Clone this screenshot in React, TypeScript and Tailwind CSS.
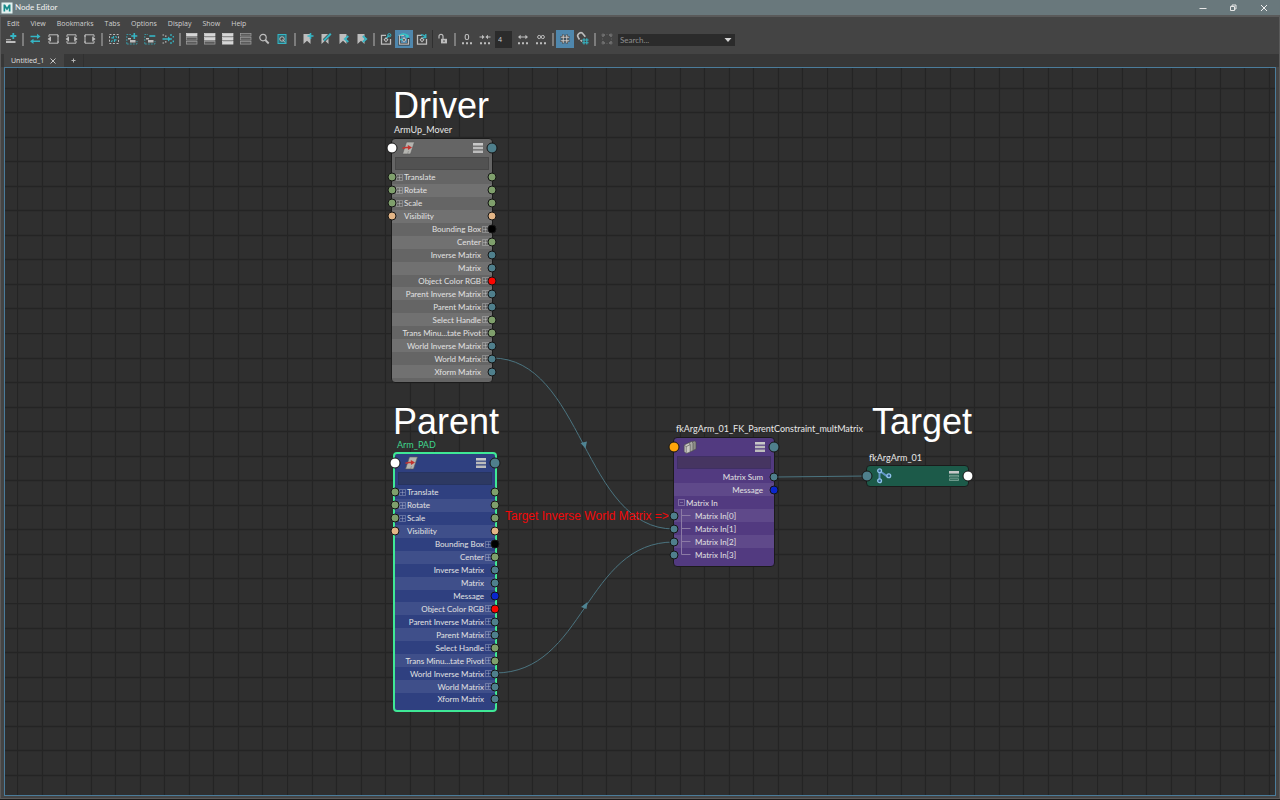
import type { ReactNode } from 'react';
import { useState } from 'react';

const CYAN = '#35b5c4';
const LIGHT = '#bdbdbd';

const menus = ['Edit', 'View', 'Bookmarks', 'Tabs', 'Options', 'Display', 'Show', 'Help'];

type Port = 'green' | 'teal' | 'peach' | 'black' | 'red' | 'blue' | 'white' | 'orange';

const portColors: Record<Port, string> = {
  green: 'bg-[#7f9f6c]',
  teal: 'bg-[#4f7f8c]',
  peach: 'bg-[#e3b586]',
  black: 'bg-black',
  red: 'bg-[#fb0500]',
  blue: 'bg-[#0a26cc]',
  white: 'bg-white',
  orange: 'bg-[#ffa50a]',
};

interface Attr {
  name: string;
  left?: Port;
  right?: Port;
  expand?: boolean;
  align?: 'left' | 'right';
}

const inputs: Attr[] = [
  { name: 'Translate', left: 'green', right: 'green', expand: true, align: 'left' },
  { name: 'Rotate', left: 'green', right: 'green', expand: true, align: 'left' },
  { name: 'Scale', left: 'green', right: 'green', expand: true, align: 'left' },
  { name: 'Visibility', left: 'peach', right: 'peach', align: 'left' },
  { name: 'Bounding Box', right: 'black', expand: true },
  { name: 'Center', right: 'green', expand: true },
  { name: 'Inverse Matrix', right: 'teal' },
  { name: 'Matrix', right: 'teal' },
];

const outputs: Attr[] = [
  { name: 'Object Color RGB', right: 'red', expand: true },
  { name: 'Parent Inverse Matrix', right: 'teal', expand: true },
  { name: 'Parent Matrix', right: 'teal', expand: true },
  { name: 'Select Handle', right: 'green', expand: true },
  { name: 'Trans Minu...tate Pivot', right: 'green', expand: true },
  { name: 'World Inverse Matrix', right: 'teal', expand: true },
  { name: 'World Matrix', right: 'teal', expand: true },
  { name: 'Xform Matrix', right: 'teal' },
];

const driverAttrs = [...inputs, ...outputs];
const parentAttrs: Attr[] = [...inputs, { name: 'Message', right: 'blue' }, ...outputs];

function Icon({ children }: { children: ReactNode }) {
  return (
    <svg viewBox="0 0 18 18" className="block h-[18px] w-[18px]" fill="none" aria-hidden="true">
      {children}
    </svg>
  );
}

function ToolButton({ label, active, children }: { label: string; active?: boolean; children: ReactNode }) {
  return (
    <button
      type="button"
      title={label}
      aria-label={label}
      className={`h-[18px] w-[18px] shrink-0 ${active ? 'bg-[#4f87ad]' : 'hover:bg-[#555]'}`}
    >
      <Icon>{children}</Icon>
    </button>
  );
}

function Separator({ width = 'w-[6px]' }: { width?: string }) {
  return (
    <div className={`flex h-[13px] shrink-0 justify-center ${width}`}>
      <div className="w-[2px] bg-[#7c7c7c]" />
    </div>
  );
}

function BoxArrow({ left, right }: { left?: boolean; right?: boolean }) {
  return (
    <>
      <path d="M5 7V4.8h9V7M5 11v2.2h9V11" stroke={LIGHT} />
      {!left && <path d="M5 5v8" stroke={LIGHT} />}
      {!right && <path d="M14 5v8" stroke={LIGHT} />}
      {left && <path d="M7 6.3v5.4L3.6 9z" fill={LIGHT} />}
      {right && <path d="M12.2 6.3v5.4L15.6 9z" fill={LIGHT} />}
    </>
  );
}

function Bars({ filled }: { filled: number }) {
  return (
    <>
      {[4, 8, 12].map((y, i) => (
        <rect
          key={y}
          x="3.5"
          y={y - 0.5}
          width="10.5"
          height="2.6"
          fill={i < filled ? '#d6d6d6' : '#5a5a5a'}
          stroke={i < filled ? '#d6d6d6' : '#a0a0a0'}
          strokeWidth="0.7"
        />
      ))}
    </>
  );
}

function Bookmark() {
  return <path d="M4.5 4h7v10L8 10.8 4.5 14z" fill={LIGHT} />;
}

function Container({ children }: { children: ReactNode }) {
  return (
    <>
      <path d="M9 5.3H4.5v8.9h9V9" stroke={LIGHT} strokeWidth="1.3" />
      <path d="M9 7l2.5 2.8L9 12.5 6.5 9.8z" fill={LIGHT} />
      <circle cx="9" cy="9.8" r="0.9" fill="#333" />
      {children}
    </>
  );
}

function Dots() {
  return <path d="M4 12.2h2v2H4zM8 12.2h2v2H8zM12 12.2h2v2h-2z" fill={LIGHT} />;
}

function Toolbar() {
  const [depth, setDepth] = useState('4');
  const [search, setSearch] = useState('');

  return (
    <div className="flex h-[18px] items-center">
      <ToolButton label="Create node">
        <path d="M11.3 3v6M8.3 6h6" stroke={CYAN} strokeWidth="1.8" />
        <path d="M4 9.2h5v1H4zM4 11h9.5v2H4z" fill={LIGHT} />
      </ToolButton>
      <Separator />
      <ToolButton label="Input and output connections">
        <path d="M4.5 6.5h8M14 11.3H6" stroke={CYAN} strokeWidth="1.6" />
        <path d="M11 3.8L14.5 6.5 11 9zM7.5 8.8L4 11.3 7.5 14z" fill={CYAN} />
      </ToolButton>
      <ToolButton label="Input connections"><BoxArrow left /></ToolButton>
      <ToolButton label="Input and output boxes"><BoxArrow left right /></ToolButton>
      <ToolButton label="Output connections"><BoxArrow right /></ToolButton>
      <Separator width="w-[7px]" />
      <ToolButton label="Rearrange graph">
        <rect x="4.5" y="4.5" width="9" height="9" stroke={LIGHT} strokeDasharray="2 1.6" />
        <path d="M6.3 7.8h2.2V6M11.6 9.9H9.5v2M10.5 6.2l1.5 1.4M6.2 11.8l1.3-1.4" stroke={CYAN} strokeWidth="1.2" />
      </ToolButton>
      <ToolButton label="Add selected nodes">
        <path d="M3.8 14V4.5H8M3.8 14H14v-3" stroke={CYAN} strokeWidth="0.7" strokeDasharray="2 1" />
        <path d="M11.3 3v6M8.3 6h6" stroke={CYAN} strokeWidth="1.6" />
        <path d="M5 8h3v1.4H5zM7 10h5.5v2.4H7z" fill={LIGHT} />
      </ToolButton>
      <ToolButton label="Remove selected nodes">
        <path d="M3.8 14V4.5H7M3.8 14H14v-3" stroke={CYAN} strokeWidth="0.7" strokeDasharray="2 1" />
        <path d="M8.3 6h6" stroke={CYAN} strokeWidth="1.6" />
        <path d="M5 8h3v1.4H5zM7 10h5.5v2.4H7z" fill={LIGHT} />
      </ToolButton>
      <ToolButton label="Clear graph">
        <path d="M3.5 5h1.6M3.5 13h1.6M6 6.2h1.5M6 11.8h1.5" stroke={LIGHT} strokeWidth="1.2" />
        <path d="M3.5 9h6.5M12 4v2M12 12v2M12 8v2M14.3 6v1.6M14.3 10.6v1.6" stroke={CYAN} strokeWidth="1.3" />
        <path d="M9 6.4L12 9 9 11.6z" fill={CYAN} />
      </ToolButton>
      <Separator />
      <ToolButton label="Hide attributes"><Bars filled={1} /></ToolButton>
      <ToolButton label="Show connected attributes"><Bars filled={2} /></ToolButton>
      <ToolButton label="Show all attributes"><Bars filled={3} /></ToolButton>
      <ToolButton label="Show custom attributes"><Bars filled={0} /></ToolButton>
      <ToolButton label="Filter attributes">
        <circle cx="8" cy="7.6" r="3.2" stroke={LIGHT} strokeWidth="1.2" />
        <path d="M10.3 10l3.4 3.5" stroke={LIGHT} strokeWidth="1.8" />
      </ToolButton>
      <ToolButton label="Toggle swatches">
        <rect x="5" y="4.5" width="8" height="9" fill="#2b6f78" stroke={CYAN} strokeWidth="1" />
        <circle cx="9" cy="9" r="2.2" fill="#444" stroke={LIGHT} strokeWidth="1" />
        <path d="M9.5 9.5L12 12.5" stroke={LIGHT} />
      </ToolButton>
      <Separator width="w-2" />
      <ToolButton label="Create bookmark">
        <Bookmark />
        <path d="M11.5 3v6M8.5 6h6" stroke={CYAN} strokeWidth="1.6" />
      </ToolButton>
      <ToolButton label="Edit bookmark">
        <Bookmark />
        <path d="M7 10.5L13.8 3.8" stroke="#444" strokeWidth="3.4" />
        <path d="M7 10.5L13.8 3.8" stroke={CYAN} strokeWidth="2" />
      </ToolButton>
      <ToolButton label="Previous bookmark">
        <Bookmark />
        <path d="M13.3 6l-3.4 3 3.4 3" stroke={CYAN} strokeWidth="1.8" />
      </ToolButton>
      <ToolButton label="Next bookmark">
        <Bookmark />
        <path d="M9.8 6l3.4 3-3.4 3" stroke={CYAN} strokeWidth="1.8" />
      </ToolButton>
      <Separator />
      <ToolButton label="Pin graph">
        <Container>
          <path d="M9.5 8l3-2.8" stroke={CYAN} strokeWidth="1.3" />
          <circle cx="12.3" cy="5.2" r="1.6" stroke={CYAN} />
        </Container>
      </ToolButton>
      <ToolButton label="Synchronize selection" active>
        <path d="M4.5 6v8.2h9V8" stroke="#303030" strokeWidth="2.4" />
        <Container>
          <path d="M5 5.5a4 3 0 0 1 7 0M5 9.5h3" stroke="#33c7c7" strokeWidth="1.5" />
          <circle cx="12.3" cy="6.2" r="1.6" fill="#33c7c7" />
        </Container>
      </ToolButton>
      <ToolButton label="Auto frame">
        <Container>
          <path d="M8 5a4 4 0 0 1 4.5 2M12.8 4v3.5H9.5" stroke={CYAN} strokeWidth="1.3" />
        </Container>
      </ToolButton>
      <div className="mx-px h-[18px] w-px shrink-0 bg-[#303030]" />
      <ToolButton label="Lock node">
        <path d="M5 8.5V6.3a2 2 0 0 1 4 0V9" stroke={LIGHT} strokeWidth="1.2" />
        <rect x="7" y="8.8" width="6" height="4.6" fill={LIGHT} />
        <path d="M10 10.2v1.8" stroke="#444" />
      </ToolButton>
      <Separator />
      <ToolButton label="Traversal depth zero">
        <rect x="7.2" y="4.5" width="3.4" height="5" rx="1.5" stroke={LIGHT} strokeWidth="1.1" />
        <Dots />
      </ToolButton>
      <ToolButton label="Reduce traversal depth">
        <path d="M3.5 7h3.5M14.5 7H11" stroke={LIGHT} />
        <path d="M6 4.7L8.6 7 6 9.3zM12 4.7L9.4 7 12 9.3z" fill={LIGHT} />
        <Dots />
      </ToolButton>
      <input
        type="text"
        aria-label="Traversal depth"
        value={depth}
        onChange={(e) => setDepth(e.target.value)}
        className="mr-[2px] ml-px h-[17px] w-[17px] shrink-0 bg-[#2b2b2b] px-[3px] font-['Open_Sans',sans-serif] text-[7px] text-[#d0d0d0] outline-none"
      />
      <ToolButton label="Increase traversal depth">
        <path d="M6 7h6" stroke={LIGHT} />
        <path d="M6.6 4.7L4 7l2.6 2.3zM11.4 4.7L14 7l-2.6 2.3z" fill={LIGHT} />
        <Dots />
      </ToolButton>
      <ToolButton label="Infinite traversal depth">
        <circle cx="7.2" cy="7" r="1.6" stroke={LIGHT} />
        <circle cx="10.8" cy="7" r="1.6" stroke={LIGHT} />
        <Dots />
      </ToolButton>
      <Separator />
      <ToolButton label="Grid visibility" active>
        <path d="M7.2 4.5v9M10.8 4.5v9M4.5 7.2h9M4.5 10.8h9" stroke="#3a3a3a" strokeWidth="2.4" />
        <path d="M7.2 4.8v8.4M10.8 4.8v8.4M4.8 7.2h8.4M4.8 10.8h8.4" stroke="#d0d0d0" strokeWidth="1" />
      </ToolButton>
      <ToolButton label="Grid snap">
        <path d="M5.5 9.5L4.3 7.6a3 3 0 0 1 5-3.4l2 2.6M8 11.5L6.6 10" stroke={LIGHT} strokeWidth="1.6" />
        <path d="M10 8.2v6.4M12.8 8.2v6.4M8.2 10h6.4M8.2 12.8h6.4" stroke={CYAN} strokeWidth="1.1" />
      </ToolButton>
      <Separator />
      <ToolButton label="Frame search results">
        <path d="M5 7V5h2M11 5h2v2M13 11v2h-2M7 13H5v-2" stroke="#777" strokeWidth="1.3" />
        <path d="M4 4h2v2H4zM12 4h2v2h-2zM4 12h2v2H4zM12 12h2v2h-2zM8.5 4.5h1M8.5 13.5h1M4.5 8.5v1M13.5 8.5v1" stroke="#6d6d6d" strokeWidth="0.7" />
      </ToolButton>
      <div className="mt-[2px] ml-[2px] flex h-3 w-[117px] shrink-0 items-center bg-[#2b2b2b]">
        <input
          type="text"
          aria-label="Search"
          placeholder="Search..."
          value={search}
          onChange={(e) => setSearch(e.target.value)}
          className="h-3 w-[104px] bg-transparent px-[2px] font-[Lato,sans-serif] text-[8px] text-[#ccc] outline-none placeholder:text-[#8f8f8f]"
        />
        <button type="button" aria-label="Search history" className="flex h-3 w-3 items-center justify-center">
          <svg viewBox="0 0 8 4" className="h-1 w-2" aria-hidden="true">
            <path d="M0.5 0h7L4 4z" fill="#d5d5d5" />
          </svg>
        </button>
      </div>
    </div>
  );
}

function TitleBar() {
  return (
    <header className="flex h-[15px] shrink-0 items-center bg-[#69787c] text-[#f2f2f2]">
      <svg viewBox="0 0 12 12" className="ml-px h-3 w-3" aria-hidden="true">
        <rect x="0.5" y="0.5" width="11" height="11" fill="#e3f1f0" />
        <path d="M2.5 9.5v-7h1.6L6 5.6l1.9-3.1h1.6v7H7.8V6L6 8.6 4.2 6v3.5z" fill="#178b8b" />
      </svg>
      <h1 className="ml-[2px] font-[Lato,sans-serif] text-[8px] leading-[15px]">Node Editor</h1>
      <div className="ml-auto flex">
        <button type="button" aria-label="Minimize" className="flex h-[15px] w-[30px] items-center justify-center">
          <svg viewBox="0 0 8 8" className="h-2 w-2" aria-hidden="true">
            <path d="M0.5 4.5h7" stroke="#e6e6e6" />
          </svg>
        </button>
        <button type="button" aria-label="Restore" className="flex h-[15px] w-[30px] items-center justify-center">
          <svg viewBox="0 0 8 8" className="h-2 w-2" fill="none" stroke="#e6e6e6" aria-hidden="true">
            <path d="M1.5 2.5h4v4h-4zM3 2.2V1h4v4H5.8" />
          </svg>
        </button>
        <button type="button" aria-label="Close" className="flex h-[15px] w-8 items-center justify-center">
          <svg viewBox="0 0 8 8" className="h-2 w-2" stroke="#f0f0f0" aria-hidden="true">
            <path d="M1 1l6 6M7 1L1 7" />
          </svg>
        </button>
      </div>
    </header>
  );
}

function Plug({ color, side, big }: { color: Port; side: 'left' | 'right'; big?: boolean }) {
  const size = big ? 'h-[11px] w-[11px]' : 'h-[9px] w-[9px]';
  const place = side === 'left' ? 'left-0 -translate-x-1/2' : 'right-0 translate-x-1/2';
  return (
    <span
      className={`absolute top-1/2 -translate-y-1/2 rounded-full border border-[#151515] ${size} ${place} ${portColors[color]}`}
    />
  );
}

function Expander({ open }: { open?: boolean }) {
  return (
    <svg viewBox="0 0 7 7" className="h-[7px] w-[7px] shrink-0" fill="none" stroke="#fff" strokeOpacity="0.25" aria-hidden="true">
      <path d={open ? 'M0.5 0.5h6v6h-6zM2 3.5h3' : 'M0.5 0.5h6v6h-6zM1 3.5h5M3.5 1v5'} />
    </svg>
  );
}

function ViewModeIcon({ compact }: { compact?: boolean }) {
  return (
    <svg viewBox="0 0 10 10" className="h-[10px] w-[10px]" aria-hidden="true">
      <path d="M0 0h10v2.6H0z" fill="#c8c8c8" />
      {compact ? (
        <path d="M0.3 4.3h9.4v1.6H0.3zM0.3 7.8h9.4v1.6H0.3z" fill="none" stroke="#8fb3a6" strokeWidth="0.8" />
      ) : (
        <path d="M0 3.7h10v2.6H0zM0 7.4h10V10H0z" fill="#bcbcbc" />
      )}
    </svg>
  );
}

function TransformIcon() {
  return (
    <svg viewBox="0 0 15 14" className="h-[14px] w-[15px]" aria-hidden="true">
      <path d="M5.5 1h8L9.5 13h-8z" fill="#b4b4b0" stroke="#555" strokeWidth="0.6" />
      <path d="M7.5 10L6.5 13" stroke="#777" strokeWidth="0.5" />
      <path d="M1.5 7.2L5 6.5h3" fill="none" stroke="#c4332f" strokeWidth="1.5" />
      <path d="M6.8 4l4.2 2.6-4 2.4z" fill="#c4332f" />
    </svg>
  );
}

function MatrixIcon() {
  return (
    <svg viewBox="0 0 14 14" className="h-[14px] w-[14px]" strokeWidth="0.6" stroke="#4c4c4c" aria-hidden="true">
      <path d="M6.5 2.5l5-1.5 1.5 1v7l-4 2z" fill="#8d8d88" />
      <path d="M4 4l4.5-2.5L10 3v7.5l-4.5 2z" fill="#a9a9a4" />
      <path d="M1.2 5L5.5 3l1.7 1.5V12l-4 1.5-2-2z" fill="#c9c9c4" />
      <path d="M3.2 6.6v6.6M1.2 5l2 1.6 4-2" fill="none" />
    </svg>
  );
}

function JointIcon() {
  return (
    <svg viewBox="0 0 16 16" className="h-4 w-4" aria-hidden="true">
      <path d="M2.5 3h2v9h-2zM4 2l8.5 6L11 9.5 3.5 4z" fill="#5f94c4" />
      <g fill="#2d5f8c" stroke="#8fc1ea" strokeWidth="1.3">
        <circle cx="3.6" cy="2.8" r="1.9" />
        <circle cx="3.6" cy="12.8" r="1.9" />
        <circle cx="12.8" cy="7.8" r="1.9" />
      </g>
    </svg>
  );
}

function AttrRow({ attr, light }: { attr: Attr; light: boolean }) {
  const isLeft = attr.align === 'left';
  return (
    <li className={`relative flex min-h-0 flex-1 items-center ${light ? 'bg-white/8' : ''}`}>
      {attr.left && <Plug color={attr.left} side="left" />}
      {isLeft ? (
        <div className="flex items-center pl-1">
          <span className="w-2">{attr.expand && <Expander />}</span>
          <span>{attr.name}</span>
        </div>
      ) : (
        <div className="ml-auto flex items-center pr-[3px]">
          <span>{attr.name}</span>
          <span className="w-2 pl-px">{attr.expand && <Expander />}</span>
        </div>
      )}
      {attr.right && <Plug color={attr.right} side="right" />}
    </li>
  );
}

function NodeHeader({ icon, left, right, field }: { icon: ReactNode; left: Port; right: Port; field: string }) {
  return (
    <>
      <div className="relative flex h-[18px] items-center justify-between px-[9px]">
        <Plug color={left} side="left" big />
        {icon}
        <ViewModeIcon />
        <Plug color={right} side="right" big />
      </div>
      <div className={`mx-[3px] mb-px h-[13px] shrink-0 border ${field}`} />
    </>
  );
}

const labelText = "font-[Lato,sans-serif] text-[8px] leading-[12px] text-[#e2e2e2]";
const titleText = "absolute whitespace-nowrap font-[Lato,sans-serif] text-[9px] leading-[12px]";
const headingText = "absolute font-['Liberation_Sans',Arial,sans-serif] text-[36px] leading-[36px] text-white";

function Wires() {
  return (
    <svg className="absolute inset-0 h-full w-full" fill="none" aria-hidden="true">
      <defs>
        <pattern id="grid" width="270" height="270" patternUnits="userSpaceOnUse" x="12" y="-5">
          {Array.from({ length: 11 }, (_, i) => Math.round((i * 270) / 11)).map((p) => (
            <path key={p} d={`M${p + 0.5} 0v270M0 ${p + 0.5}h270`} stroke="#242424" strokeWidth="1.4" />
          ))}
        </pattern>
      </defs>
      <rect width="100%" height="100%" fill="url(#grid)" />
      <g stroke="#4b7480">
        <path d="M487 290C578 290 578 461 669 461" />
        <path d="M490 605C580 605 580 474 669 474" />
        <path d="M770 409L862 408" />
      </g>
      <g fill="#4f8493">
        <path d="M575.5 375l6.5-1.5-1.5 7z" />
        <path d="M582.5 534l-6.5 5 5.5 2z" />
      </g>
    </svg>
  );
}

function MatrixInputs() {
  return (
    <>
      <li className="flex h-[13px] items-center pl-1">
        <Expander open />
        <span className="ml-px">Matrix In</span>
      </li>
      {[0, 1, 2, 3].map((n) => (
        <li key={n} className={`relative flex h-[13px] items-center pl-1 ${n % 2 === 0 ? 'bg-white/8' : ''}`}>
          <Plug color="teal" side="left" />
          <svg viewBox="0 0 13 13" className="mr-1 h-[13px] w-[13px]" fill="none" stroke="#8b7aa5" aria-hidden="true">
            <path d={n === 3 ? 'M3.5 0v6.5h9' : 'M3.5 0v13M3.5 6.5h9'} />
          </svg>
          <span>Matrix In[{n}]</span>
        </li>
      ))}
    </>
  );
}

function Graph() {
  return (
    <main className="relative min-h-0 flex-1 overflow-hidden border border-[#4b7c9b] bg-[#2f2f2f]">
      <Wires />

      <h2 className={`${headingText} top-[20px] left-[388px]`}>Driver</h2>
      <h2 className={`${headingText} top-[336px] left-[388px]`}>Parent</h2>
      <h2 className={`${headingText} top-[336px] left-[867px]`}>Target</h2>
      <p className="absolute top-[441px] left-[500px] font-['Liberation_Sans',Arial,sans-serif] text-[12px] leading-[14px] whitespace-nowrap text-[#f20808]">
        Target Inverse World Matrix =&gt;
      </p>

      <h3 className={`${titleText} top-[56px] left-[389px] text-[#e8e8e8]`}>ArmUp_Mover</h3>
      <section className={`${labelText} absolute top-[70px] left-[386px] w-[102px] rounded-[4px] border border-[#1b1b1b] bg-[#656565]`}>
        <NodeHeader icon={<TransformIcon />} left="white" right="teal" field="border-[#484848] bg-[#525252]" />
        <ul className="flex h-[207px] flex-col">
          {driverAttrs.map((a, i) => <AttrRow key={a.name} attr={a} light={i % 2 === 1} />)}
        </ul>
        <div className="h-1" />
      </section>

      <h3 className={`${titleText} top-[371px] left-[392px] text-[#3fd68d]`}>Arm_PAD</h3>
      <section className={`${labelText} absolute top-[384px] left-[388px] w-[104px] rounded-[4px] border-2 border-[#3fe896] bg-[#2f4080]`}>
        <NodeHeader icon={<TransformIcon />} left="white" right="teal" field="border-[#27345f] bg-[#2d3962]" />
        <ul className="flex h-[220px] flex-col">
          {parentAttrs.map((a, i) => <AttrRow key={a.name} attr={a} light={i % 2 === 1} />)}
        </ul>
        <div className="h-1" />
      </section>

      <h3 className={`${titleText} top-[355px] left-[671px] text-[#e8e8e8]`}>fkArgArm_01_FK_ParentConstraint_multMatrix</h3>
      <section className={`${labelText} absolute top-[369px] left-[668px] w-[102px] rounded-[4px] border border-[#1b1b1b] bg-[#523a80]`}>
        <NodeHeader icon={<MatrixIcon />} left="orange" right="teal" field="border-[#3f2f63] bg-[#463561]" />
        <ul className="flex flex-col">
          <li className="relative flex h-[13px] items-center justify-end pr-[11px]">
            Matrix Sum
            <Plug color="teal" side="right" />
          </li>
          <li className="relative flex h-[13px] items-center justify-end bg-white/8 pr-[11px]">
            Message
            <Plug color="blue" side="right" />
          </li>
          <MatrixInputs />
        </ul>
        <div className="h-[5px]" />
      </section>

      <h3 className={`${titleText} top-[384px] left-[864px] text-[#e8e8e8]`}>fkArgArm_01</h3>
      <section className="absolute top-[397px] left-[861px] w-[103px] rounded-[4px] border border-[#1b1b1b] bg-[#1c5a49]">
        <div className="relative flex h-[20px] items-center justify-between px-[9px]">
          <Plug color="teal" side="left" big />
          <JointIcon />
          <ViewModeIcon compact />
          <Plug color="white" side="right" big />
        </div>
      </section>
    </main>
  );
}

export default function App() {
  return (
    <div className="flex h-screen flex-col bg-[#1a1a1a] font-['Open_Sans',sans-serif] text-[7px] leading-[10px] text-[#d0d0d0]">
      <TitleBar />
      <div className="mb-px flex min-h-0 flex-1 flex-col border border-t-2 border-[#5a5a5a] bg-[#444]">
        <nav aria-label="Node editor menus" className="flex h-[13px] shrink-0 items-center gap-[11px] pl-[6px]">
          {menus.map((m) => (
            <button key={m} type="button">{m}</button>
          ))}
        </nav>
        <div className="h-6 shrink-0 pl-px">
          <Toolbar />
        </div>
        <div role="tablist" className="flex h-[13px] shrink-0 items-stretch bg-[#373737] pl-[3px]">
          <div className="flex w-[60px] items-center gap-[6px] bg-[#444] pl-[7px] text-[#e0e0e0]">
            <button type="button" role="tab" aria-selected="true">Untitled_1</button>
            <button type="button" aria-label="Close tab">
              <svg viewBox="0 0 6 6" className="h-[6px] w-[6px]" stroke="#c4c4c4" aria-hidden="true">
                <path d="M0.5 0.5l5 5M5.5 0.5l-5 5" />
              </svg>
            </button>
          </div>
          <button type="button" aria-label="New tab" className="flex w-5 items-center justify-center border-r border-[#303030]">
            <svg viewBox="0 0 5 5" className="h-[5px] w-[5px]" stroke="#b4b4b4" aria-hidden="true">
              <path d="M0.5 2.5h4M2.5 0.5v4" />
            </svg>
          </button>
        </div>
        <div className="flex min-h-0 flex-1 flex-col px-[3px] pb-[2px]">
          <Graph />
        </div>
      </div>
    </div>
  );
}
